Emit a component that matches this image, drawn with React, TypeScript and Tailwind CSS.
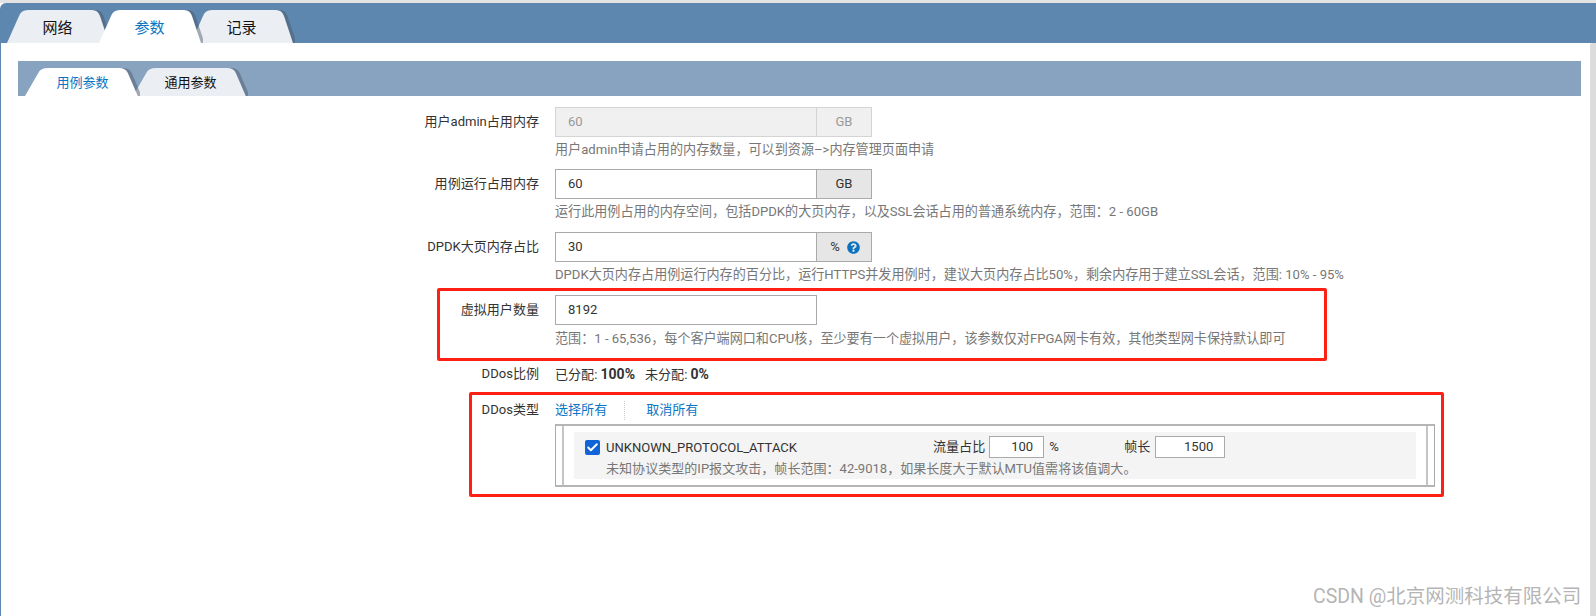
import { Check } from 'lucide-react';
import { FaQuestionCircle } from 'react-icons/fa';

function Tab({ label, active, big, z }: { label: string; active?: boolean; big?: boolean; z: string }) {
    return (
        <div className={`relative flex items-center justify-center ${z} ${big ? 'h-[33px] w-[104px] -mr-[12px] pt-[3px] text-[15px]' : 'h-[28px] w-[115px] -mr-[7px] pt-[1px]'} ${active ? 'text-[#0b75c4]' : 'text-[#111]'}`}>
            <svg className="absolute inset-0 h-full w-full" viewBox="0 0 104 33" preserveAspectRatio="none">
                <path d="M104 33 L95 6 Q93 0 87 0 L23 0 Q16 0 14 6 L0 33 Z" fill="#4b5563" opacity="0.45" transform="translate(1.5 0)" />
                <path d="M102 33 L93 6 Q91 0 85 0 L21 0 Q14 0 12 6 L0 33 Z" fill={active ? '#ffffff' : '#ebeef3'} />
            </svg>
            <span className={`relative ${big ? 'pr-[3px]' : ''}`}>{label}</span>
        </div>
    );
}

function Row({ label, children, className }: { label: string; children: React.ReactNode; className?: string }) {
    return (
        <div className={`flex ${className ?? ''}`}>
            <div className="w-[539px] shrink-0 text-right leading-[30px] text-[#333]">{label}</div>
            <div className="ml-[16px] min-w-0 flex-1">{children}</div>
        </div>
    );
}

function Field({ value, addon, disabled }: { value: string; addon?: React.ReactNode; disabled?: boolean }) {
    const border = disabled ? 'border-[#d4d4d4]' : 'border-[#aaaaaa]';
    return (
        <div className="flex h-[30px] w-[317px]">
            <div className={`flex h-full w-[262px] shrink-0 items-center border pl-[12px] ${border} ${disabled ? 'bg-[#f0f0f0] text-[#999]' : 'bg-white text-[#333]'}`}>{value}</div>
            {addon && (
                <div className={`-ml-px flex h-full flex-1 items-center justify-center border ${border} ${disabled ? 'bg-[#f0f0f0] text-[#999]' : 'bg-[#e6e6e6] text-[#333]'}`}>{addon}</div>
            )}
        </div>
    );
}

function Help({ children }: { children: React.ReactNode }) {
    return <div className="mt-[3px] text-[13.1px] leading-[20px] text-[#777]">{children}</div>;
}

export default function App() {
    return (
        <div className="relative h-[616px] w-[1596px] overflow-hidden bg-white text-[13.05px] [font-family:Roboto,'Noto_Sans_CJK_SC',sans-serif]">
            <div className="h-[3px] bg-[#e3e3e3]" />
            <div className="flex h-[40px] items-end rounded-tl-[6px] bg-[#5d87ae] pl-[7px]">
                <Tab label="网络" big z="z-[1]" />
                <Tab label="参数" big active z="z-[3]" />
                <Tab label="记录" big z="z-[1]" />
            </div>

            <div className="h-[573px] border-l border-l-[#5d87ae] pl-[17px] pr-[15px] pt-[18px]">
                <div className="flex h-[35px] items-end bg-[#87a3c0] pl-[7px]">
                    <Tab label="用例参数" active z="z-[3]" />
                    <Tab label="通用参数" z="z-[1]" />
                </div>

                <div className="-ml-[18px] pt-[11px]">
                    <Row label="用户admin占用内存" className="h-[62px]">
                        <Field value="60" addon="GB" disabled />
                        <Help>用户admin申请占用的内存数量，可以到资源–&gt;内存管理页面申请</Help>
                    </Row>
                    <Row label="用例运行占用内存" className="h-[63px]">
                        <Field value="60" addon="GB" />
                        <Help>运行此用例占用的内存空间，包括DPDK的大页内存，以及SSL会话占用的普通系统内存，范围：2 - 60GB</Help>
                    </Row>
                    <Row label="DPDK大页内存占比" className="h-[63px]">
                        <Field
                            value="30"
                            addon={
                                <span className="flex items-center gap-[7px] pl-[2px]">
                                    %
                                    <FaQuestionCircle className="h-[13px] w-[13px] text-[#0b72c0]" />
                                </span>
                            }
                        />
                        <Help>DPDK大页内存占用例运行内存的百分比，运行HTTPS并发用例时，建议大页内存占比50%，剩余内存用于建立SSL会话，范围: 10% - 95%</Help>
                    </Row>
                    <Row label="虚拟用户数量" className="h-[64px]">
                        <Field value="8192" />
                        <div className="mt-[4px] text-[13.1px] leading-[20px] text-[#777]">范围：1 - 65,536，每个客户端网口和CPU核，至少要有一个虚拟用户，该参数仅对FPGA网卡有效，其他类型网卡保持默认即可</div>
                    </Row>
                    <Row label="DDos比例" className="h-[36px]">
                        <div className="leading-[30px] text-[#333]">
                            已分配: <b className="text-[14px]">100%</b>
                            <span className="ml-[10px]">未分配: <b className="text-[14px]">0%</b></span>
                        </div>
                    </Row>
                    <Row label="DDos类型">
                        <div className="mt-[3px] flex h-[24px] items-center text-[#0b75c4]">
                            <span>选择所有</span>
                            <span className="mx-[17px] h-[19px] border-l border-dotted border-[#ccc]" />
                            <span className="ml-[4px]">取消所有</span>
                        </div>
                        <div className="mt-[2px] h-[63px] w-[880px] border-2 border-x-0 border-[#b5b5b5] border-l border-r border-l-[#aaa] border-r-[#aaa]">
                            <div className="mx-[6px] h-full border-x-2 border-[#c4c4c4] px-[10px] pt-[6px]">
                                <div className="h-[47px] bg-[#f4f4f4] px-[11px] pt-[4px]">
                                    <div className="flex h-[22px] items-center text-[#333]">
                                        <span className="flex h-[15px] w-[15px] shrink-0 items-center justify-center rounded-[2px] bg-[#1064d8]">
                                            <Check className="h-[13px] w-[13px] text-white" strokeWidth={3.5} />
                                        </span>
                                        <span className="ml-[6px] w-[327px] pt-[1px]">UNKNOWN_PROTOCOL_ATTACK</span>
                                        <span>流量占比</span>
                                        <span className="ml-[4px] flex h-[22px] w-[55px] items-center justify-end border border-[#aaa] bg-white pr-[10px]">100</span>
                                        <span className="ml-[5px] w-[75px]">%</span>
                                        <span>帧长</span>
                                        <span className="ml-[5px] flex h-[22px] w-[70px] items-center justify-end border border-[#aaa] bg-white pr-[11px]">1500</span>
                                    </div>
                                    <div className="ml-[21px] pt-[1px] leading-[20px] text-[#777]">未知协议类型的IP报文攻击，帧长范围：42-9018，如果长度大于默认MTU值需将该值调大。</div>
                                </div>
                            </div>
                        </div>
                    </Row>
                </div>
            </div>

            <div className="absolute right-0 top-[43px] h-[573px] w-[6px] rounded-tl-[2px] bg-[#dcdcdc]" />

            {/* annotations drawn on the screenshot */}
            <div className="absolute left-[437px] top-[288px] h-[73px] w-[890px] rounded-[2px] border-[3px] border-[#ff2015]" />
            <div className="absolute left-[469px] top-[392px] h-[105px] w-[975px] rounded-[2px] border-[3px] border-[#ff2015]" />
            <div className="absolute left-[1313px] top-[582px] text-[19.5px] text-[#b5b5b5]">CSDN @北京网测科技有限公司</div>
        </div>
    );
}
